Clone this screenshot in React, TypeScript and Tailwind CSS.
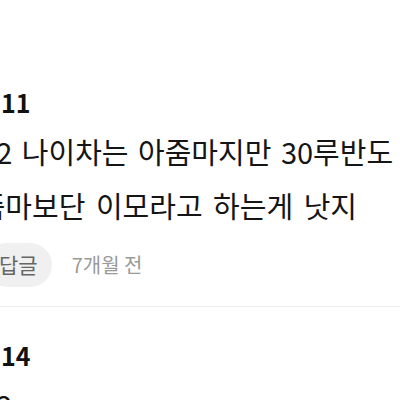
import React from 'react';

interface Comment {
  author: string;
  lines: string[];
  time: string;
}

const comments: Comment[] = [
  {
    author: '회원11',
    lines: ['한 2 나이차는 아줌마지만 30루반도', '아줌마보단 이모라고 하는게 낫지'],
    time: '7개월 전',
  },
  {
    author: '회원14',
    lines: ['딱 2...'],
    time: '7개월 전',
  },
];

const CommentItem: React.FC<{ comment: Comment }> = ({ comment }) => (
  <div className="border-b border-[#ececec] pb-[19px]">
    <div className="ml-[3px] text-[25px] font-bold leading-[28px] text-[#111]">{comment.author}</div>
    <div className="mt-[8px] text-[29px] leading-[54px] text-[#151515] [word-spacing:4px] whitespace-nowrap">
      {comment.lines.map((line, i) => (
        <p key={i} className={i === 0 ? 'pl-[8px] [word-spacing:3px]' : ''}>
          {line}
        </p>
      ))}
    </div>
    <div className="mt-[11px] flex items-center">
      <button className="ml-[33px] flex h-[44px] items-center rounded-full bg-[#f0f0f0] pl-[14px] pr-[14px] text-[21px] text-[#666]">
        답글
      </button>
      <span className="ml-[20px] text-[20px] text-[#9a9a9a]">{comment.time}</span>
    </div>
  </div>
);

export default function App() {
  return (
    <div
      className="h-[400px] w-[400px] overflow-hidden bg-white"
      style={{ fontFamily: '"Noto Sans CJK KR", "Noto Sans", sans-serif' }}
    >
      <div className="-ml-[48px] w-[480px] pt-[88px]">
        <CommentItem comment={comments[0]} />
        <div className="pt-[34px]">
          <CommentItem comment={comments[1]} />
        </div>
      </div>
    </div>
  );
}
